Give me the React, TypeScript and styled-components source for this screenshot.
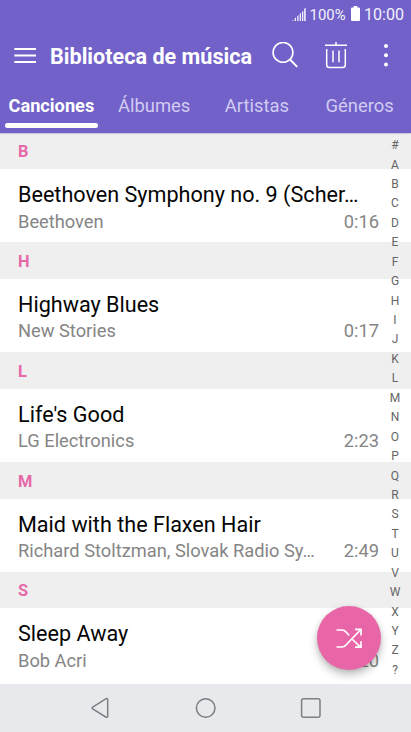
import React from 'react';
import styled, { createGlobalStyle } from 'styled-components';

const GlobalStyle = createGlobalStyle`
  * { box-sizing: border-box; }
  body { margin: 0; font-family: Roboto, "Liberation Sans", sans-serif; }
`;

const Screen = styled.div`
  position: relative;
  display: flex;
  flex-direction: column;
  width: 411px;
  height: 732px;
  overflow: hidden;
  background: #fff;
`;

const Header = styled.header`
  position: relative;
  z-index: 1;
  flex: none;
  height: 132.7px;
  background: #7161c8;
  color: #fff;
  box-shadow: 0 0.5px 1.5px rgba(60, 50, 120, 0.55);
`;

const StatusBar = styled.div`
  display: flex;
  align-items: center;
  height: 28px;
  padding-left: 292px;
  line-height: 28px;
  white-space: nowrap;
  color: #f3f1fc;
  svg { display: block; flex: none; }
`;

const Battery = styled.span`
  flex: none;
  width: 42px;
  padding-top: 1px;
  padding-left: 3.6px;
  font-size: 14.9px;
`;

const BatteryLevel = styled.span`
  flex: none;
  margin: 0 4px 1px 3px;
`;

const Clock = styled.span`
  padding-top: 1px;
  font-size: 16.1px;
`;

const Toolbar = styled.div`
  display: flex;
  align-items: center;
  height: 55px;
  padding-left: 14px;
  svg { display: block; flex: none; }
`;

const Title = styled.h1`
  flex: none;
  width: 208px;
  margin: 0 14px;
  padding-top: 2px;
  font-size: 21.6px;
  line-height: 30px;
  font-weight: 700;
  white-space: nowrap;
`;

const Actions = styled.div`
  flex: none;
  display: flex;
  align-items: center;
  gap: 26px;
`;

const Tabs = styled.nav`
  display: grid;
  grid-template-columns: repeat(4, 1fr);
  height: 45px;
`;

const Tab = styled.div<{ $active?: boolean }>`
  display: flex;
  flex-direction: column;
  align-items: center;
  justify-content: space-between;
  padding: 11px 4.5px 0;
  font-size: ${p => (p.$active ? '18.2px' : '18.4px')};
  line-height: 24px;
  font-weight: ${p => (p.$active ? 700 : 400)};
  color: ${p => (p.$active ? '#fff' : '#d2ccf2')};
  &::after {
    content: '';
    width: 100%;
    height: 4.6px;
    border-radius: 2.3px;
    background: ${p => (p.$active ? '#fff' : 'transparent')};
  }
`;

const Body = styled.main`
  display: grid;
  grid-template-columns: minmax(0, 1fr);
  flex: 1;
  min-height: 0;
  overflow: hidden;
`;

const List = styled.div`
  grid-area: 1 / 1;
  min-width: 0;
`;

const Letter = styled.div`
  height: 36.5px;
  padding: 1.5px 18px 0;
  background: #efefef;
  color: #e668a9;
  font-size: 16.4px;
  line-height: 36px;
  font-weight: 700;
`;

const Row = styled.div`
  height: 73.3px;
  padding: 12px 32px 0 18px;
`;

const Song = styled.div`
  height: 26.5px;
  overflow: visible;
  white-space: nowrap;
  font-size: 21.6px;
  line-height: 28px;
  color: #050505;
`;

const Meta = styled.div`
  display: flex;
  justify-content: space-between;
  font-size: 18.3px;
  line-height: 27px;
  white-space: nowrap;
  color: #858585;
`;

const Index = styled.div`
  grid-area: 1 / 1;
  justify-self: end;
  display: grid;
  grid-auto-rows: 19.45px;
  width: 32px;
  padding-top: 3.4px;
  text-align: center;
  font-size: 12px;
  line-height: 19.44px;
  color: #666;
  z-index: 1;
`;

const Shuffle = styled.button`
  position: absolute;
  z-index: 2;
  left: 317.3px;
  top: 606px;
  width: 64px;
  height: 64px;
  padding: 0;
  border: 0;
  border-radius: 50%;
  background: #e866a8;
  box-shadow: 0 5px 9px rgba(0, 0, 0, 0.24), 0 1px 4px rgba(0, 0, 0, 0.1);
  svg { display: block; }
`;

const NavBar = styled.footer`
  flex: none;
  display: flex;
  justify-content: center;
  align-items: center;
  gap: 81.6px;
  height: 48px;
  background: #e8e9ed;
  svg { display: block; fill: none; stroke: #7d7e82; stroke-width: 1.5; }
`;

const songs = [
  { letter: 'B', title: 'Beethoven Symphony no. 9 (Scher…', artist: 'Beethoven', time: '0:16' },
  { letter: 'H', title: 'Highway Blues', artist: 'New Stories', time: '0:17' },
  { letter: 'L', title: "Life's Good", artist: 'LG Electronics', time: '2:23' },
  { letter: 'M', title: 'Maid with the Flaxen Hair', artist: 'Richard Stoltzman, Slovak Radio Sy…', time: '2:49' },
  { letter: 'S', title: 'Sleep Away', artist: 'Bob Acri', time: '3:20' },
];

const SignalIcon = () => (
  <svg width="14" height="15" viewBox="0 0 14 15" fill="currentColor">
    <path d="M0 14 1.3 12.8V14H0zM2.7 11.6 4 10.4V14H2.7zM5.2 9.300 6.500 8.100V14H5.2zM7.700 7 9 5.800V14H7.700zM10 4.900 11.300 3.700V14H10zM12.100 2 13.700.500V14H12.100z" />
  </svg>
);

const BatteryIcon = () => (
  <svg width="9" height="15" viewBox="0 0 9 15" fill="#fff">
    <path d="M2.7 0h3.6v1.6H8q1 0 1 1V14q0 1-1 1H1q-1 0-1-1V2.600q0-1 1-1h1.700z" />
  </svg>
);

const MenuIcon = () => (
  <svg width="22" height="18" viewBox="0 0 22 18" stroke="#fff" strokeWidth="2">
    <path d="M.3 2H22M.3 8.500H22M.3 15H22" />
  </svg>
);

const SearchIcon = () => (
  <svg width="27" height="27" viewBox="0 0 27 27" fill="none" stroke="#fff" strokeWidth="1.600">
    <circle cx="11" cy="10.400" r="9.900" />
    <path d="M18 17.500 25.200 24.900" strokeWidth="2" />
  </svg>
);

const TrashIcon = () => (
  <svg width="22" height="28" viewBox="0 0 22 28" fill="none" stroke="#fff" strokeWidth="1.500">
    <path d="M0 3.200H22M11 0V3.200M1.700 7V22.800q0 2.800 2.800 2.800h13q2.800 0 2.800-2.800V7M8 8.500V20.300M14 8.500V20.300" />
  </svg>
);

const MoreIcon = () => (
  <svg width="26" height="24" viewBox="0 0 26 24" fill="#fff">
    <circle cx="13" cy="2" r="2" />
    <circle cx="13" cy="11.300" r="2" />
    <circle cx="13" cy="20.500" r="2" />
  </svg>
);

export default function App() {
  return (
    <Screen>
      <GlobalStyle />
      <Header>
        <StatusBar>
          <SignalIcon />
          <Battery>100%</Battery>
          <BatteryLevel><BatteryIcon /></BatteryLevel>
          <Clock>10:00</Clock>
        </StatusBar>
        <Toolbar>
          <MenuIcon />
          <Title>Biblioteca de música</Title>
          <Actions>
            <SearchIcon />
            <TrashIcon />
            <MoreIcon />
          </Actions>
        </Toolbar>
        <Tabs>
          <Tab $active>Canciones</Tab>
          <Tab>Álbumes</Tab>
          <Tab>Artistas</Tab>
          <Tab>Géneros</Tab>
        </Tabs>
      </Header>
      <Body>
        <List>
          {songs.map(s => (
            <section key={s.letter}>
              <Letter>{s.letter}</Letter>
              <Row>
                <Song>{s.title}</Song>
                <Meta>
                  <span>{s.artist}</span>
                  <span>{s.time}</span>
                </Meta>
              </Row>
            </section>
          ))}
        </List>
        <Index>
          {[...'#ABCDEFGHIJKLMNOPQRSTUVWXYZ?'].map(c => (
            <span key={c}>{c}</span>
          ))}
        </Index>
      </Body>
      <Shuffle aria-label="Aleatorio">
        <svg width="64" height="64" viewBox="0 0 64 64" fill="none" stroke="#fff" strokeWidth="1.700">
          <path d="M19.500 24H25q2.500 0 4 2L32.200 29.500M35.500 33.500 43.500 41.200M19.500 41H25q2.500 0 4-2L43.800 23.500M38 23.300H44V29.500M44 35.200V41.200H38" />
        </svg>
      </Shuffle>
      <NavBar>
        <svg width="24" height="24" viewBox="0 0 24 24">
          <path d="M5.100 10.800 17.700 2.900q2-1 2 1V20q0 2-2 1L5.100 13.200q-2-1.200 0-2.400z" />
        </svg>
        <svg width="24" height="24" viewBox="0 0 24 24">
          <circle cx="11.700" cy="12" r="9.300" />
        </svg>
        <svg width="24" height="24" viewBox="0 0 24 24">
          <rect x="2.600" y="2.800" width="18.400" height="18.400" rx="2" />
        </svg>
      </NavBar>
    </Screen>
  );
}
